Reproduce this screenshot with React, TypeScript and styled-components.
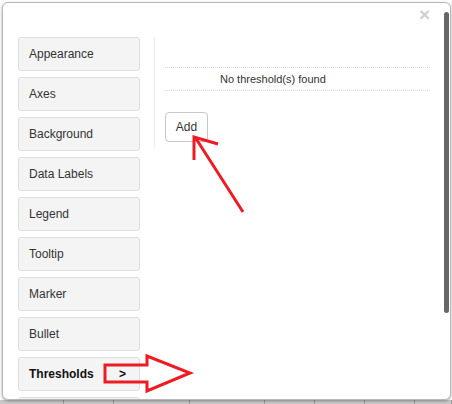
import React from "react";
import styled, { createGlobalStyle } from "styled-components";

const Global = createGlobalStyle`
  html, body { margin: 0; padding: 0; background: #fff; }
  body { font-family: "Liberation Sans", Arial, sans-serif; }
  * { box-sizing: border-box; }
`;

const Page = styled.div`
  width: 452px;
  height: 404px;
  position: relative;
  overflow: hidden;
  display: flex;
  flex-direction: column;
  padding: 2px 1px 0 2px;
`;

const Dialog = styled.div`
  position: relative;
  width: 449px;
  height: 398px;
  flex: none;
  background: #fff;
  border: 1px solid #b8b8b8;
  border-radius: 6px;
  box-shadow: 0 1px 3px rgba(0, 0, 0, 0.35);
  overflow: hidden;
  display: flex;
  align-items: flex-start;
  padding: 34px 0 0 15px;
  z-index: 1;
`;

const Strip = styled.div`
  flex: 1;
  margin: 0 -1px 0 -2px;
  display: grid;
  grid-template-columns: 64px 50px 76px 75px 50px 50px 50px 37px;
  background: #c8c8c8;
`;

const StripCell = styled.div`
  border-right: 1px solid #9a9a9a;
`;

const Nav = styled.div`
  width: 122px;
  flex: none;
  display: flex;
  flex-direction: column;
  gap: 6px;
`;

const NavButton = styled.div<{ $active?: boolean }>`
  height: 34px;
  flex: none;
  display: flex;
  align-items: center;
  justify-content: space-between;
  padding: 0 13px 0 10px;
  background: #f4f4f4;
  border: 1px solid #dedede;
  border-radius: 3px;
  font-size: 12px;
  color: ${(p) => (p.$active ? "#111" : "#333")};
  font-weight: ${(p) => (p.$active ? "bold" : "normal")};
`;

const Chevron = styled.span`
  font-weight: bold;
  font-size: 12px;
  color: #111;
`;

const Panel = styled.div`
  margin-left: 14px;
  width: 276px;
  height: 111px;
  border-left: 1px solid #eaeaea;
  padding-left: 10px;
  display: flex;
  flex-direction: column;
`;

const HeaderSpace = styled.div`
  height: 30px;
`;

const EmptyRow = styled.div`
  height: 24px;
  border-top: 1px dotted #d8d8d8;
  border-bottom: 1px dotted #d8d8d8;
  display: flex;
  align-items: center;
  padding-left: 55px;
  font-size: 11px;
  color: #333;
`;

const AddButton = styled.button`
  margin-top: 21px;
  width: 43px;
  height: 30px;
  background: #fff;
  border: 1px solid #c8c8c8;
  border-radius: 4px;
  font-family: "Liberation Sans", Arial, sans-serif;
  font-size: 12px;
  color: #333;
  padding: 0;
`;

const Close = styled.span`
  position: absolute;
  top: 2px;
  right: 20px;
  font-size: 19px;
  font-weight: bold;
  color: #cfcfcf;
  line-height: 20px;
`;

const ScrollThumb = styled.div`
  position: absolute;
  top: 9px;
  right: 1px;
  width: 5px;
  height: 301px;
  background: #676767;
  border-radius: 3px;
`;

const Annotations = styled.svg`
  position: absolute;
  left: 0;
  top: 0;
  z-index: 2;
  pointer-events: none;
`;

const items = [
  "Appearance",
  "Axes",
  "Background",
  "Data Labels",
  "Legend",
  "Tooltip",
  "Marker",
  "Bullet",
  "Thresholds",
  "",
];

export default function App() {
  return (
    <>
      <Global />
      <Page>
        <Dialog>
          <Close>×</Close>
          <ScrollThumb />
          <Nav>
            {items.map((label, i) => (
              <NavButton key={i} $active={label === "Thresholds"}>
                <span>{label}</span>
                {label === "Thresholds" && <Chevron>&gt;</Chevron>}
              </NavButton>
            ))}
          </Nav>
          <Panel>
            <HeaderSpace />
            <EmptyRow>No threshold(s) found</EmptyRow>
            <div>
              <AddButton>Add</AddButton>
            </div>
          </Panel>
        </Dialog>
        <Strip>
          {Array.from({ length: 8 }).map((_, i) => (
            <StripCell key={i} />
          ))}
        </Strip>
        <Annotations width="452" height="404" viewBox="0 0 452 404">
          <g fill="none" stroke="#ed1c24" strokeWidth="3" strokeLinejoin="miter">
            <path d="M243 212 L195 137 M194 160 L194 137 L218 144" />
            <path d="M105 365 L147 365 L147 356 L190 373 L147 391 L147 382 L105 382 Z" />
          </g>
        </Annotations>
      </Page>
    </>
  );
}
